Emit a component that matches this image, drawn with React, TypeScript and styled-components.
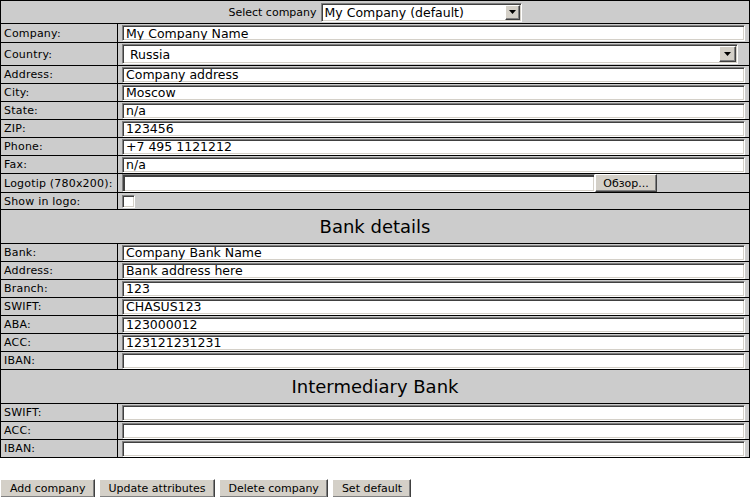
import React from 'react';
import styled, { createGlobalStyle } from 'styled-components';

const GlobalStyle = createGlobalStyle`
  body {
    margin: 0;
    background: #ffffff;
    font-family: 'DejaVu Sans', Verdana, sans-serif;
  }
`;

const Table = styled.table`
  width: 750px;
  border-collapse: collapse;
  background: #cccccc;
  font-size: 11px;
  color: #000;
`;

const Cell = styled.td<{ $h?: number }>`
  border: 1px solid #000;
  padding: 0 4px;
  height: ${(p) => p.$h ?? 17}px;
  vertical-align: middle;
  white-space: nowrap;
`;

const HeadCell = styled.td`
  border: 1px solid #000;
  height: 33px;
  padding: 0;
  font-size: 18px;
  text-align: center;
  vertical-align: middle;
`;

const LabelCell = styled.td`
  border: 1px solid #000;
  padding: 0 3px;
  width: 110px;
  font-size: 11px;
  letter-spacing: 0.2px;
  vertical-align: middle;
  white-space: nowrap;
`;

const SelectRow = styled.td`
  border: 1px solid #000;
  padding: 0;
  height: 22px;
  vertical-align: middle;
  font-size: 11px;
`;

const SelectBar = styled.div`
  display: flex;
  align-items: center;
  justify-content: center;
  gap: 4px;
  height: 22px;
`;

const inset = `
  border: 1px solid;
  border-color: #808080 #ffffff #ffffff #808080;
  box-shadow: inset 1px 1px 0 #404040, inset -1px -1px 0 #d4d0c8;
`;

const TextInput = styled.input`
  display: block;
  box-sizing: border-box;
  width: 100%;
  height: 16px;
  margin: 0;
  padding: 0 3px;
  ${inset}
  background: #fff;
  font-family: 'DejaVu Sans', Verdana, sans-serif;
  font-size: 12.5px;
  color: #000;
  outline: none;
  caret-color: #000;
`;

const SelectWrap = styled.span<{ $w: number; $h: number }>`
  position: relative;
  display: block;
  width: ${(p) => p.$w}px;
  height: ${(p) => p.$h}px;
  box-sizing: border-box;
  ${inset}
  background: #fff;
`;

const NativeSelect = styled.select<{ $indent: number }>`
  appearance: none;
  border: none;
  background: transparent;
  width: 100%;
  height: 100%;
  margin: 0;
  padding: 0 0 0 ${(p) => p.$indent}px;
  font-family: 'DejaVu Sans', Verdana, sans-serif;
  font-size: 12.5px;
  color: #000;
  outline: none;
`;

const ArrowButton = styled.span<{ $w: number }>`
  position: absolute;
  top: 1px;
  right: 1px;
  bottom: 1px;
  width: ${(p) => p.$w}px;
  box-sizing: border-box;
  background: #d4d0c8;
  border: 1px solid;
  border-color: #ffffff #404040 #404040 #ffffff;
  box-shadow: inset -1px -1px 0 #808080;
  display: flex;
  align-items: center;
  justify-content: center;
  pointer-events: none;
`;

const FileRow = styled.div`
  display: flex;
  align-items: center;
  width: 535px;
`;

const FileInput = styled(TextInput)`
  flex: 1;
  height: 18px;
  box-shadow: inset 2px 2px 0 #404040, inset -1px -1px 0 #d4d0c8;
`;

const ClassicButton = styled.button`
  height: 19px;
  margin: 0;
  padding: 0 8px 0 9px;
  background: #d4d0c8;
  border: 1px solid;
  border-color: #ffffff #404040 #404040 #ffffff;
  box-shadow: inset -1px -1px 0 #808080;
  font-family: 'DejaVu Sans', Verdana, sans-serif;
  font-size: 11px;
  color: #000;
  white-space: nowrap;
`;

const BrowseButton = styled(ClassicButton)`
  width: 62px;
  height: 18px;
  padding: 0;
`;

const Check = styled.span`
  display: block;
  width: 13px;
  height: 13px;
  box-sizing: border-box;
  ${inset}
  background: #fff;
`;

const ButtonBar = styled.div`
  display: flex;
  gap: 4px;
  margin-top: 21px;
`;

const Arrow = () => (
  <svg width="7" height="4" viewBox="0 0 7 4">
    <path d="M0 0h7L3.5 4z" fill="#000" />
  </svg>
);

type SelectProps = { value: string; width: number; height: number; indent: number; button: number };

const Select = ({ value, width, height, indent, button }: SelectProps) => (
  <SelectWrap $w={width} $h={height}>
    <NativeSelect $indent={indent} defaultValue={value}>
      <option>{value}</option>
    </NativeSelect>
    <ArrowButton $w={button}>
      <Arrow />
    </ArrowButton>
  </SelectWrap>
);

const companyFields: [string, string][] = [
  ['Address:', 'Company address'],
  ['City:', 'Moscow'],
  ['State:', 'n/a'],
  ['ZIP:', '123456'],
  ['Phone:', '+7 495 1121212'],
  ['Fax:', 'n/a'],
];

const bankFields: [string, string][] = [
  ['Bank:', 'Company Bank Name'],
  ['Address:', 'Bank address here'],
  ['Branch:', '123'],
  ['SWIFT:', 'CHASUS123'],
  ['ABA:', '123000012'],
  ['ACC:', '123121231231'],
];

const intermediaryFields = ['SWIFT:', 'ACC:', 'IBAN:'];

const FieldRow = ({ label, value, h, focus }: { label: string; value: string; h?: number; focus?: boolean }) => (
  <tr>
    <LabelCell>{label}</LabelCell>
    <Cell $h={h}>
      <TextInput defaultValue={value} autoFocus={focus} />
    </Cell>
  </tr>
);

const App = () => (
  <>
    <GlobalStyle />
    <Table>
      <tbody>
        <tr>
          <SelectRow colSpan={2}>
            <SelectBar>
              <span>Select company</span>
              <Select value="My Company (default)" width={201} height={19} indent={3} button={15} />
            </SelectBar>
          </SelectRow>
        </tr>
        <FieldRow label="Company:" value="My Company Name" h={18} />
        <tr>
          <LabelCell>Country:</LabelCell>
          <Cell $h={22}>
            <Select value="Russia" width={616} height={20} indent={7} button={17} />
          </Cell>
        </tr>
        {companyFields.map(([l, v]) => (
          <FieldRow key={l} label={l} value={v} />
        ))}
        <tr>
          <LabelCell>Logotip (780x200):</LabelCell>
          <Cell $h={18}>
            <FileRow>
              <FileInput />
              <BrowseButton>Обзор...</BrowseButton>
            </FileRow>
          </Cell>
        </tr>
        <tr>
          <LabelCell>Show in logo:</LabelCell>
          <Cell $h={16}>
            <Check />
          </Cell>
        </tr>
        <tr>
          <HeadCell colSpan={2}>Bank details</HeadCell>
        </tr>
        {bankFields.map(([l, v]) => (
          <FieldRow key={l} label={l} value={v} />
        ))}
        <FieldRow label="IBAN:" value="" focus />
        <tr>
          <HeadCell colSpan={2}>Intermediary Bank</HeadCell>
        </tr>
        {intermediaryFields.map((l) => (
          <FieldRow key={l} label={l} value="" />
        ))}
      </tbody>
    </Table>
    <ButtonBar>
      <ClassicButton>Add company</ClassicButton>
      <ClassicButton>Update attributes</ClassicButton>
      <ClassicButton>Delete company</ClassicButton>
      <ClassicButton>Set default</ClassicButton>
    </ButtonBar>
  </>
);

export default App;
